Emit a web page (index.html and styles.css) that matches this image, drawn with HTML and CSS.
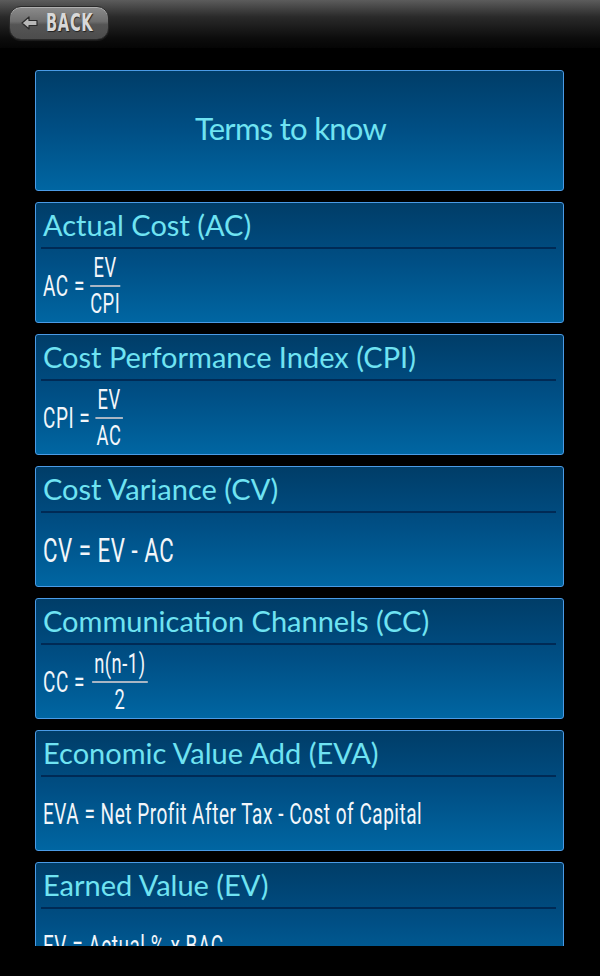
FILE: index.html
```html
<!DOCTYPE html>
<html>
<head>
<meta charset="utf-8">
<link rel="stylesheet" href="styles.css">
</head>
<body>
<div class="topbar">
  <div class="back">
    <svg class="back-icon" width="18" height="14" viewBox="0 0 18 14">
      <path d="M1 7 L8 1 L8 4.5 L16 4.5 L16 9.5 L8 9.5 L8 13 Z" fill="#b8b8b8" stroke="#2a2a2a" stroke-width="1.2" stroke-linejoin="round"/>
    </svg>
    <span class="back-text">BACK</span>
  </div>
</div>
<div class="list">
  <div class="card header-card"><span class="header-title">Terms to know</span></div>

  <div class="card">
    <div class="title">Actual Cost (AC)</div>
    <div class="formula"><span class="expr"><span class="f">AC = </span><span class="frac"><span class="num">EV</span><span class="den">CPI</span></span></span></div>
  </div>

  <div class="card">
    <div class="title">Cost Performance Index (CPI)</div>
    <div class="formula"><span class="expr"><span class="f">CPI = </span><span class="frac"><span class="num">EV</span><span class="den">AC</span></span></span></div>
  </div>

  <div class="card">
    <div class="title">Cost Variance (CV)</div>
    <div class="formula"><span class="expr"><span class="f big">CV = EV - AC</span></span></div>
  </div>

  <div class="card">
    <div class="title">Communication Channels (CC)</div>
    <div class="formula"><span class="expr"><span class="f">CC = </span><span class="frac wide"><span class="num">n(n-1)</span><span class="den">2</span></span></span></div>
  </div>

  <div class="card">
    <div class="title">Economic Value Add (EVA)</div>
    <div class="formula"><span class="expr"><span class="f">EVA = Net Profit After Tax - Cost of Capital</span></span></div>
  </div>

  <div class="card">
    <div class="title">Earned Value (EV)</div>
    <div class="formula"><span class="expr"><span class="f">EV = Actual % x BAC</span></span></div>
  </div>
</div>
</body>
</html>
```
FILE: styles.css
```css
html, body {
  margin: 0;
  padding: 0;
  background: #000;
}
body {
  width: 600px;
  height: 976px;
  overflow: hidden;
}
.topbar {
  height: 48px;
  background: linear-gradient(#5c5c5c 0%, #2a2a2a 35%, #0c0c0c 80%, #050505 100%);
  padding: 6px 0 0 9px;
  box-sizing: border-box;
}
.back {
  width: 100px;
  height: 34px;
  box-sizing: border-box;
  border-radius: 12px;
  border: 1px solid #2a2a2a;
  background: linear-gradient(#8c8c8c 0%, #6e6e6e 45%, #555 55%, #4c4c4c 100%);
  box-shadow: inset 0 1px 0 #b0b0b0, 0 1px 1px rgba(255,255,255,0.08);
  display: flex;
  align-items: center;
  padding-left: 11px;
  overflow: visible;
}
.back-icon {
  display: block;
  flex: none;
}
.back-text {
  flex: none;
  margin-left: 7px;
  font-family: "DejaVu Sans Condensed", "DejaVu Sans", sans-serif;
  font-weight: bold;
  font-size: 24px;
  color: #d8d8d8;
  letter-spacing: 1px;
  text-shadow: 1px 1px 1px #222;
  transform: scaleX(0.68);
  transform-origin: left center;
  line-height: 1;
}
.list {
  height: 898px;
  overflow: hidden;
  padding: 22px 36px 0 35px;
  box-sizing: border-box;
}
.card {
  height: 121px;
  box-sizing: border-box;
  border: 1px solid #4a9be6;
  border-radius: 3px;
  background: linear-gradient(#003d68 0%, #004f85 50%, #0066a2 100%);
  margin-bottom: 11px;
  display: flex;
  flex-direction: column;
}
.header-card {
  align-items: center;
  justify-content: center;
}
.header-title {
  font-family: Lato, "Noto Sans", sans-serif;
  font-size: 31px;
  letter-spacing: -0.7px;
  color: #6fe3f2;
  padding: 0 18px 6px 0;
}
.title {
  height: 44px;
  flex: none;
  font-family: Lato, "Noto Sans", sans-serif;
  font-size: 29px;
  color: #6fe3f2;
  line-height: 44px;
  border-bottom: 2px solid #002a55;
  margin: 0 7px 0 5px;
  padding-left: 2px;
  white-space: nowrap;
}
.formula {
  flex: 1;
  display: flex;
  align-items: center;
  padding-left: 7px;
  font-family: Roboto, "Liberation Sans", sans-serif;
  color: #f2f6fa;
}
.expr {
  display: inline-flex;
  align-items: center;
  transform: scaleX(0.655);
  transform-origin: left center;
  white-space: pre;
  letter-spacing: 0.8px;
}
.f {
  font-size: 29px;
}
.f.big {
  font-size: 34px;
}
.frac {
  display: inline-flex;
  flex-direction: column;
  align-items: center;
  font-size: 28px;
  line-height: 28px;
  margin-left: 0;
}
.frac.wide {
  margin-left: 3px;
}
.num {
  padding: 0 3px 3px;
}
.den {
  border-top: 2px solid #a9b6c4;
  align-self: stretch;
  text-align: center;
  padding-top: 3px;
}
```
